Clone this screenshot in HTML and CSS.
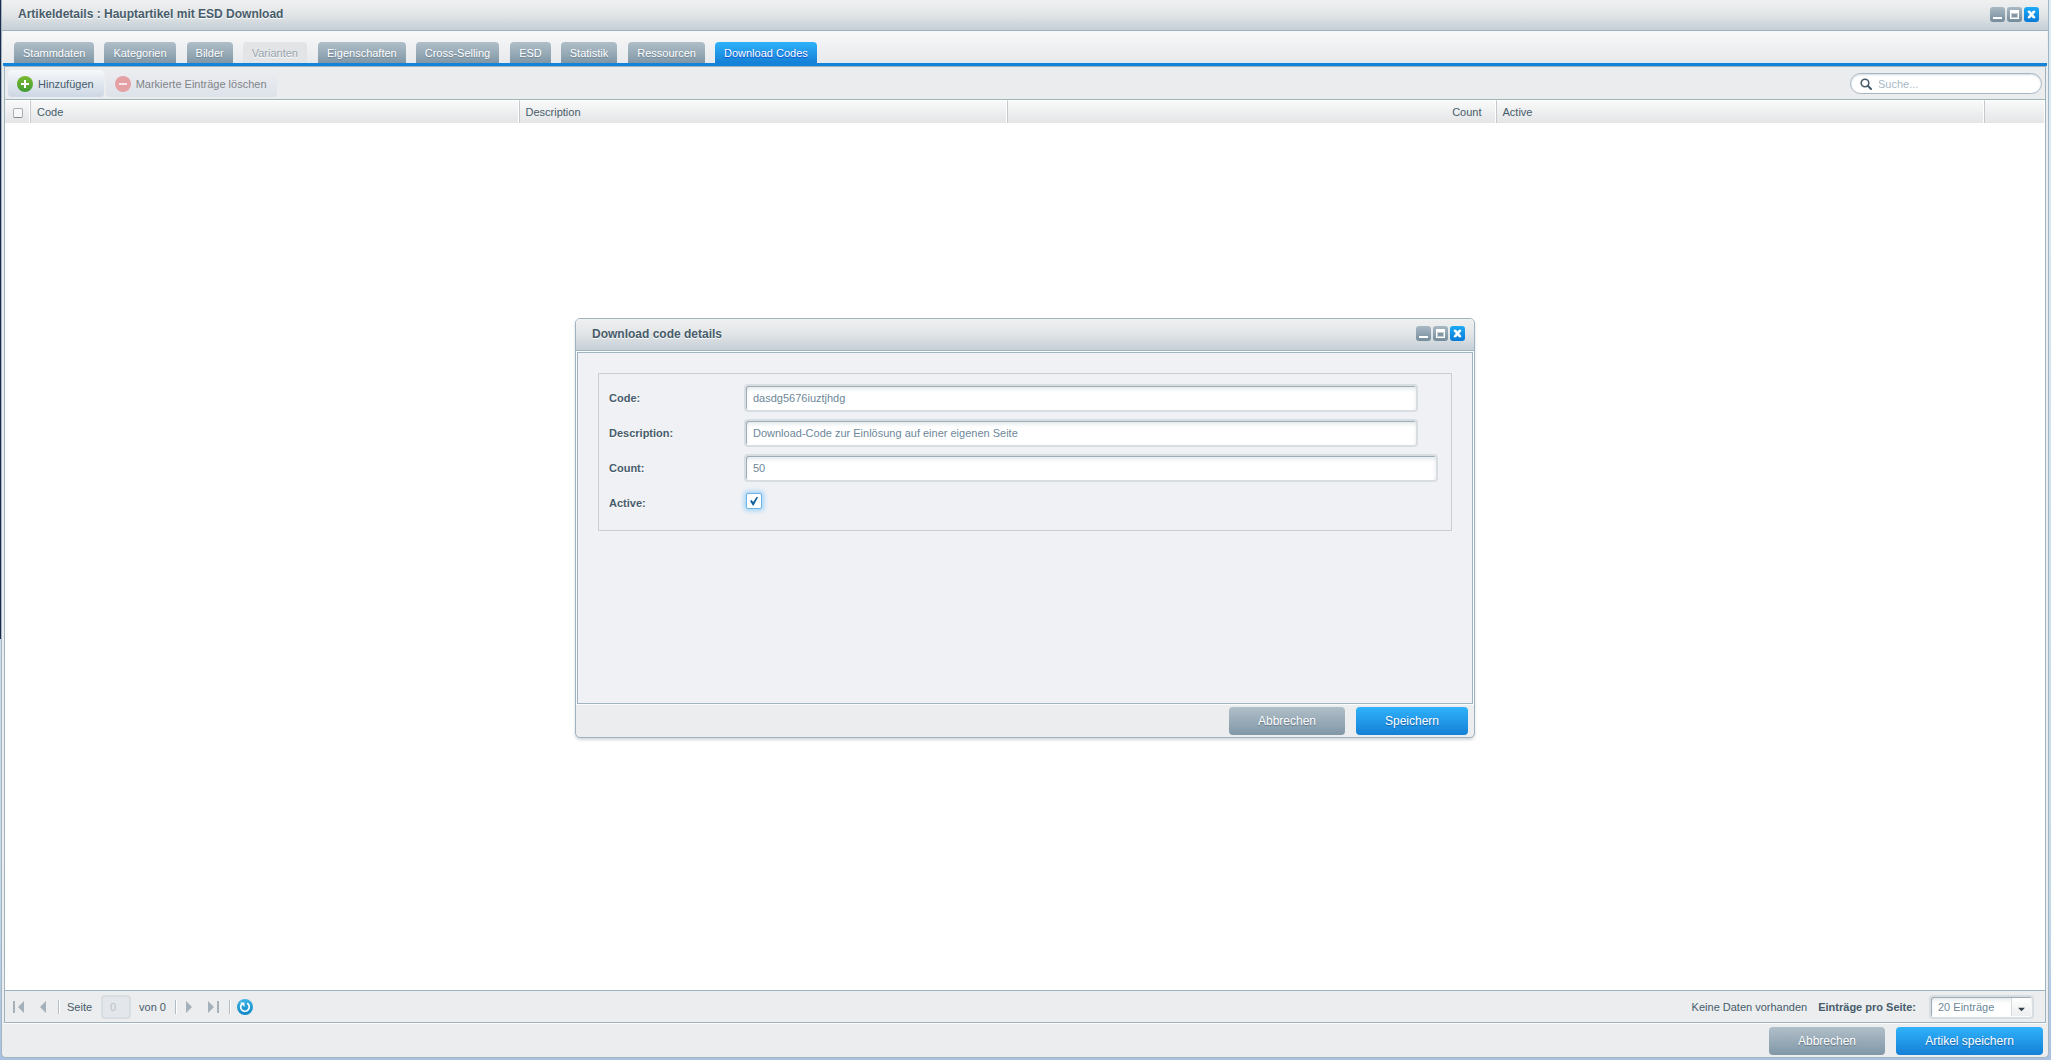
FILE: index.html
```html
<!DOCTYPE html>
<html lang="de">
<head>
<meta charset="utf-8">
<title>Artikeldetails</title>
<link rel="stylesheet" href="styles.css">
</head>
<body>
<svg width="0" height="0" class="sprite" aria-hidden="true">
  <defs>
    <linearGradient id="green" x1="0" y1="0" x2="0" y2="1"><stop offset="0" stop-color="#7cb92f"/><stop offset="1" stop-color="#3f9c35"/></linearGradient>
    <linearGradient id="blue" x1="0" y1="0" x2="0" y2="1"><stop offset="0" stop-color="#3fb4e4"/><stop offset="1" stop-color="#0e86c6"/></linearGradient>
    <symbol id="i-min" viewBox="0 0 15 15"><path d="M3 10h9v2H3z" fill="#fff"/></symbol>
    <symbol id="i-max" viewBox="0 0 15 15"><path d="M3 3h9v9H3z" fill="#fff"/><path d="M4 6h7v5H4z" fill="#c3cdd4"/><path d="M5 7h5v3H5z" fill="#8496a3"/></symbol>
    <symbol id="i-close" viewBox="0 0 15 15"><path d="M4 4h2l1.500 2L9 4h2v1L9 7.500 11 10v1H9L7.500 9 6 11H4v-1l2-2.500L4 5z" fill="#fff" stroke="#fff" stroke-width=".6"/></symbol>
  </defs>
</svg>

<main class="window">
  <header class="titlebar">
    <h1>Artikeldetails : Hauptartikel mit ESD Download</h1>
    <div class="tools">
      <button class="tool" aria-label="Minimieren"><svg><use href="#i-min"/></svg></button>
      <button class="tool" aria-label="Maximieren"><svg><use href="#i-max"/></svg></button>
      <button class="tool close" aria-label="Schließen"><svg><use href="#i-close"/></svg></button>
    </div>
  </header>

  <nav class="tabs">
    <button class="tab">Stammdaten</button>
    <button class="tab">Kategorien</button>
    <button class="tab">Bilder</button>
    <button class="tab" disabled>Varianten</button>
    <button class="tab">Eigenschaften</button>
    <button class="tab">Cross-Selling</button>
    <button class="tab">ESD</button>
    <button class="tab">Statistik</button>
    <button class="tab">Ressourcen</button>
    <button class="tab active">Download Codes</button>
  </nav>

  <section class="panel">
    <div class="toolbar">
      <button class="action">
        <svg width="16" height="16" viewBox="0 0 16 16"><circle cx="8" cy="8" r="8" fill="url(#green)"/><path d="M7 4h2v3h3v2H9v3H7V9H4V7h3z" fill="#fff"/></svg>
        Hinzufügen
      </button>
      <button class="action" disabled>
        <svg width="16" height="16" viewBox="0 0 16 16"><circle cx="8" cy="8" r="8" fill="#e5a0a3"/><path d="M4 7h8v2H4z" fill="#f6e6ea"/></svg>
        Markierte Einträge löschen
      </button>
      <label class="search">
        <svg width="12" height="12" viewBox="0 0 12 12"><circle cx="5" cy="5" r="3.800" fill="none" stroke="#475c6a" stroke-width="1.600"/><path d="M7.800 7.800 11 11" stroke="#475c6a" stroke-width="2" stroke-linecap="round"/></svg>
        <input type="search" placeholder="Suche..." aria-label="Suche">
      </label>
    </div>

    <div class="grid">
      <table>
        <colgroup><col class="col-check"><col><col><col><col><col class="col-actions"></colgroup>
        <thead>
          <tr>
            <th><input type="checkbox" class="select-all" aria-label="Alle auswählen"></th>
            <th>Code</th>
            <th>Description</th>
            <th class="num">Count</th>
            <th>Active</th>
            <th></th>
          </tr>
        </thead>
      </table>
    </div>

    <div class="pager">
      <button class="page" aria-label="Erste Seite" disabled><svg width="12" height="12" viewBox="0 0 12 12"><path d="M0 0h2v12H0zM11 0v12L5 6z"/></svg></button>
      <button class="page prev" aria-label="Vorherige Seite" disabled><svg width="7" height="12" viewBox="0 0 7 12"><path d="M6 0v12L0 6z"/></svg></button>
      <i class="sep"></i>
      <label for="page">Seite</label>
      <input id="page" class="field page-no" value="0" disabled>
      <span>von 0</span>
      <i class="sep wide"></i>
      <button class="page" aria-label="Nächste Seite" disabled><svg width="7" height="12" viewBox="0 0 7 12"><path d="M0 0v12L6 6z"/></svg></button>
      <button class="page last" aria-label="Letzte Seite" disabled><svg width="12" height="12" viewBox="0 0 12 12"><path d="M0 0v12L6 6zM9 0h2v12H9z"/></svg></button>
      <i class="sep end"></i>
      <button class="page" aria-label="Aktualisieren"><svg width="16" height="16" viewBox="0 0 16 16"><circle cx="8" cy="8" r="8" fill="url(#blue)"/><path d="M10.200 4.300A4.300 4.300 0 1 1 5.200 4.700" fill="none" stroke="#fff" stroke-width="1.700"/><path d="M3 3.500h4.500V8z" fill="#fff"/></svg></button>
      <span class="status">Keine Daten vorhanden</span>
      <label for="size" class="size-label">Einträge pro Seite:</label>
      <span class="combo field">
        <select id="size"><option>20 Einträge</option></select>
        <svg width="22" height="18" viewBox="0 0 22 18"><path d="M7 10h8l-4 4z" fill="#35424b"/></svg>
      </span>
    </div>
  </section>

  <footer class="actions">
    <button class="btn">Abbrechen</button>
    <button class="btn primary large">Artikel speichern</button>
  </footer>

  <div class="layer">
    <form class="dialog" role="dialog" aria-labelledby="dialog-title">
      <header class="titlebar">
        <h2 id="dialog-title">Download code details</h2>
        <div class="tools">
          <button type="button" class="tool" aria-label="Minimieren"><svg><use href="#i-min"/></svg></button>
          <button type="button" class="tool" aria-label="Maximieren"><svg><use href="#i-max"/></svg></button>
          <button type="button" class="tool close" aria-label="Schließen"><svg><use href="#i-close"/></svg></button>
        </div>
      </header>
      <div class="dialog-body">
        <fieldset>
          <label for="code">Code:</label>
          <input id="code" class="field short" value="dasdg5676iuztjhdg">
          <label for="description">Description:</label>
          <input id="description" class="field short" value="Download-Code zur Einlösung auf einer eigenen Seite">
          <label for="count">Count:</label>
          <input id="count" class="field" value="50">
          <label for="active">Active:</label>
          <input id="active" type="checkbox" class="check" checked>
        </fieldset>
      </div>
      <footer class="actions">
        <button type="button" class="btn">Abbrechen</button>
        <button type="button" class="btn primary">Speichern</button>
      </footer>
    </form>
  </div>
</main>
</body>
</html>
```
FILE: styles.css
```css
* { box-sizing: border-box; }

html, body { height: 100%; }

body {
  margin: 0;
  padding: 0 2px 2px 1px;
  background:
    linear-gradient(#1c2b4d, #1c2b4d) left top / 1px 639px no-repeat,
    linear-gradient(#dbeef7, #c3daea 85%, #a9c0e2);
  color: #475c6a;
  font: 11px/14px "Liberation Sans", Arial, sans-serif;
}

.sprite { position: absolute; }

button, input, select {
  margin: 0;
  padding: 0;
  border: 0;
  background: none;
  color: inherit;
  font: inherit;
}

svg { display: block; flex: none; }

.window {
  position: relative;
  display: flex;
  flex-direction: column;
  height: 100%;
  border: 1px solid #a4b5c2;
  border-top: 0;
  border-radius: 0 0 5px 5px;
  background: #ebedef;
}

/* Title bars */
.titlebar {
  display: flex;
  align-items: center;
  justify-content: space-between;
  height: 31px;
  padding: 0 9px 2px 16px;
  border-bottom: 1px solid #9fb3c1;
  background: linear-gradient(#f0f0f0, #e3e6e8 45%, #c5cfd6);
}

.titlebar h1, .titlebar h2 {
  margin: 0;
  font-size: 12px;
  font-weight: bold;
  line-height: 16px;
  text-shadow: 0 1px 0 #fff;
}

.tools { display: flex; gap: 2px; }

.tool {
  width: 15px;
  height: 15px;
  border-radius: 3px;
  background: linear-gradient(#a9b9c4, #758c9b);
}

.tool svg { width: 15px; height: 15px; }

.tool.close { background: linear-gradient(#1caaf5, #0a7ad6); }

/* Tabs */
.tabs {
  display: flex;
  align-items: flex-end;
  gap: 10px;
  height: 35px;
  margin-right: 1px;
  margin-left: 1px;
  padding-left: 11px;
  border-bottom: 3px solid #1583d7;
  background: linear-gradient(#f8f8f8, #e7e9ec);
}

.tab {
  height: 21px;
  padding: 0 9px;
  border-radius: 4px 4px 0 0;
  background: linear-gradient(#b0bfc9, #8197a6);
  color: #fff;
  text-shadow: 0 1px 1px #6d818f;
}

.tab:nth-child(even) { margin-right: 1px; }

.tab:disabled {
  background: #e2e4e6;
  color: #97a3ac;
  text-shadow: 0 1px 0 #fff;
}

.tab.active {
  background: linear-gradient(#2fb2fb, #1580d6);
  text-shadow: 0 1px 1px #0b45c8;
}

/* Main panel */
.panel {
  display: flex;
  flex: 1;
  flex-direction: column;
  margin: 0 2px;
  border: 1px solid #9fb3c1;
  box-shadow: 0 1px 0 #fafbfc;
}

.toolbar {
  display: flex;
  align-items: center;
  gap: 2px;
  height: 33px;
  padding: 1px 3px 0;
  border-bottom: 1px solid #9db5b5;
  background: #ebecee;
}

.action {
  display: flex;
  align-items: center;
  gap: 5px;
  height: 27px;
  padding: 0 10px 0 9px;
  border-radius: 4px;
  background: linear-gradient(#f6f8fb, #cdd7e5);
}

.action:disabled {
  background: linear-gradient(#ecedf0, #dde2ea);
  color: #808489;
}

.search {
  display: flex;
  align-items: center;
  gap: 6px;
  width: 192px;
  height: 21px;
  margin-left: auto;
  padding: 0 10px 0 9px;
  border: 1px solid #a7b6c3;
  border-radius: 11px;
  background: #fff;
  box-shadow: inset 0 1px 2px #d3dae0;
}

.search input { flex: 1; min-width: 0; outline: 0; }

.search input::placeholder { color: #a8bac8; opacity: 1; }

.grid { flex: 1; background: #fff; }

.grid table {
  width: 100%;
  border-collapse: separate;
  border-spacing: 0;
  table-layout: fixed;
}

.col-check { width: 26px; }
.col-actions { width: 60px; }

.grid th {
  height: 23px;
  padding: 0 14px 0 6px;
  border-top: 1px solid #fff;
  border-right: 1px solid #c5c9cc;
  background: linear-gradient(#f9f9f9, #e3e5e7);
  font-weight: normal;
  text-align: left;
  box-shadow: inset -1px 0 0 #fff;
}

.grid th:first-child { padding: 2px 0 0 8px; }
.grid th:last-child { border-right: 0; }
.grid th.num { text-align: right; }

.select-all {
  display: block;
  width: 10px;
  height: 10px;
  border: 1px solid #a9aeb2;
  border-bottom-color: #83888c;
  border-radius: 2px;
  background: #f8f8f8;
  appearance: none;
}

/* Form fields */
.field {
  height: 28px;
  padding: 0 7px;
  border: 2px solid #d8dde2;
  border-radius: 4px;
  background: #fff;
  box-shadow: inset 1px 1px 0 #9fadb7, inset 0 3px 4px #e3e8ea;
  color: #6d8799;
  outline: 0;
}

/* Paging toolbar */
.pager {
  display: flex;
  align-items: center;
  height: 32px;
  padding: 0 11px 0 8px;
  border-top: 1px solid #9fb3c1;
}

.page svg { fill: #a5b1ba; }
.page.prev { margin-left: 15px; }
.page.last { margin-left: 15px; }

.sep {
  width: 2px;
  height: 14px;
  margin: 0 7px 0 11px;
  border-left: 1px solid #b1bcc4;
  background: #fff;
}

.sep.wide { margin: 0 9px; }
.sep.end { margin: 0 6px 0 9px; }

.page-no {
  width: 30px;
  height: 24px;
  margin: 0 8px 0 9px;
  background: #e3e6ea;
  box-shadow: none;
  color: #b9c4cc;
}

.status { margin-left: auto; }
.size-label { margin: 0 13px 0 11px; font-weight: bold; }

.combo {
  display: flex;
  justify-content: space-between;
  width: 105px;
  height: 24px;
  padding: 1px 1px 1px 7px;
}

.combo select { width: 72px; appearance: none; outline: 0; }

.combo svg {
  width: 20px;
  border-left: 1px solid #d5dadd;
  background: linear-gradient(#fff, #eceeef);
}

/* Footers */
.actions {
  display: flex;
  justify-content: flex-end;
  gap: 11px;
  height: 34px;
  padding: 4px 5px 0;
}

.btn {
  width: 116px;
  height: 28px;
  border-radius: 4px;
  background: linear-gradient(#b0bfc9, #8197a6);
  color: #fff;
  font-size: 12px;
  text-shadow: 0 1px 1px #5e7281;
}

.btn.primary {
  width: 112px;
  background: linear-gradient(#2fb2fb, #1580d6);
  text-shadow: 0 1px 1px #1463a8;
}

.btn.large { width: 147px; }

/* Detail window floating over the grid */
.layer {
  position: absolute;
  inset: 30% 0 auto;
  display: flex;
  justify-content: center;
  padding-top: 1px;
}

.dialog {
  display: flex;
  flex-direction: column;
  width: 900px;
  min-height: 420px;
  border: 1px solid #9fb3c1;
  border-radius: 5px;
  background: #ebedef;
  box-shadow: 0 2px 3px #d5d8da;
}

.dialog .titlebar {
  height: 32px;
  border-radius: 4px 4px 0 0;
}

.dialog .actions {
  height: 33px;
  padding: 3px 6px 0;
}

.dialog-body {
  flex: 1;
  margin: 1px 1px 0;
  padding: 20px;
  border: 1px solid #9fb3c1;
  background: #f0f1f5;
  box-shadow: 0 0 0 1px #fafbfc;
}

fieldset {
  display: grid;
  grid-template-columns: 135px 1fr;
  row-gap: 7px;
  align-items: center;
  min-width: 0;
  margin: 0;
  padding: 10px 13px 10px 10px;
  border: 1px solid #cacdd3;
  min-height: 158px;
  align-content: start;
}

fieldset label {
  font-weight: bold;
  line-height: 28px;
  text-shadow: 0 1px 0 #fff;
}

.field.short { margin-right: 20px; }

.check {
  display: grid;
  place-items: center;
  align-self: start;
  width: 16px;
  height: 16px;
  margin: 4px 2px;
  border: 1px solid #6fb2e6;
  border-radius: 2px;
  background: #fff;
  box-shadow: 0 0 4px 2px #a3d5f8;
  appearance: none;
}

.check::before {
  width: 8px;
  height: 9px;
  background: #12619f;
  clip-path: polygon(0 50%, 20% 38%, 40% 60%, 85% 0, 100% 8%, 45% 100%, 35% 100%);
  content: "";
}
```
